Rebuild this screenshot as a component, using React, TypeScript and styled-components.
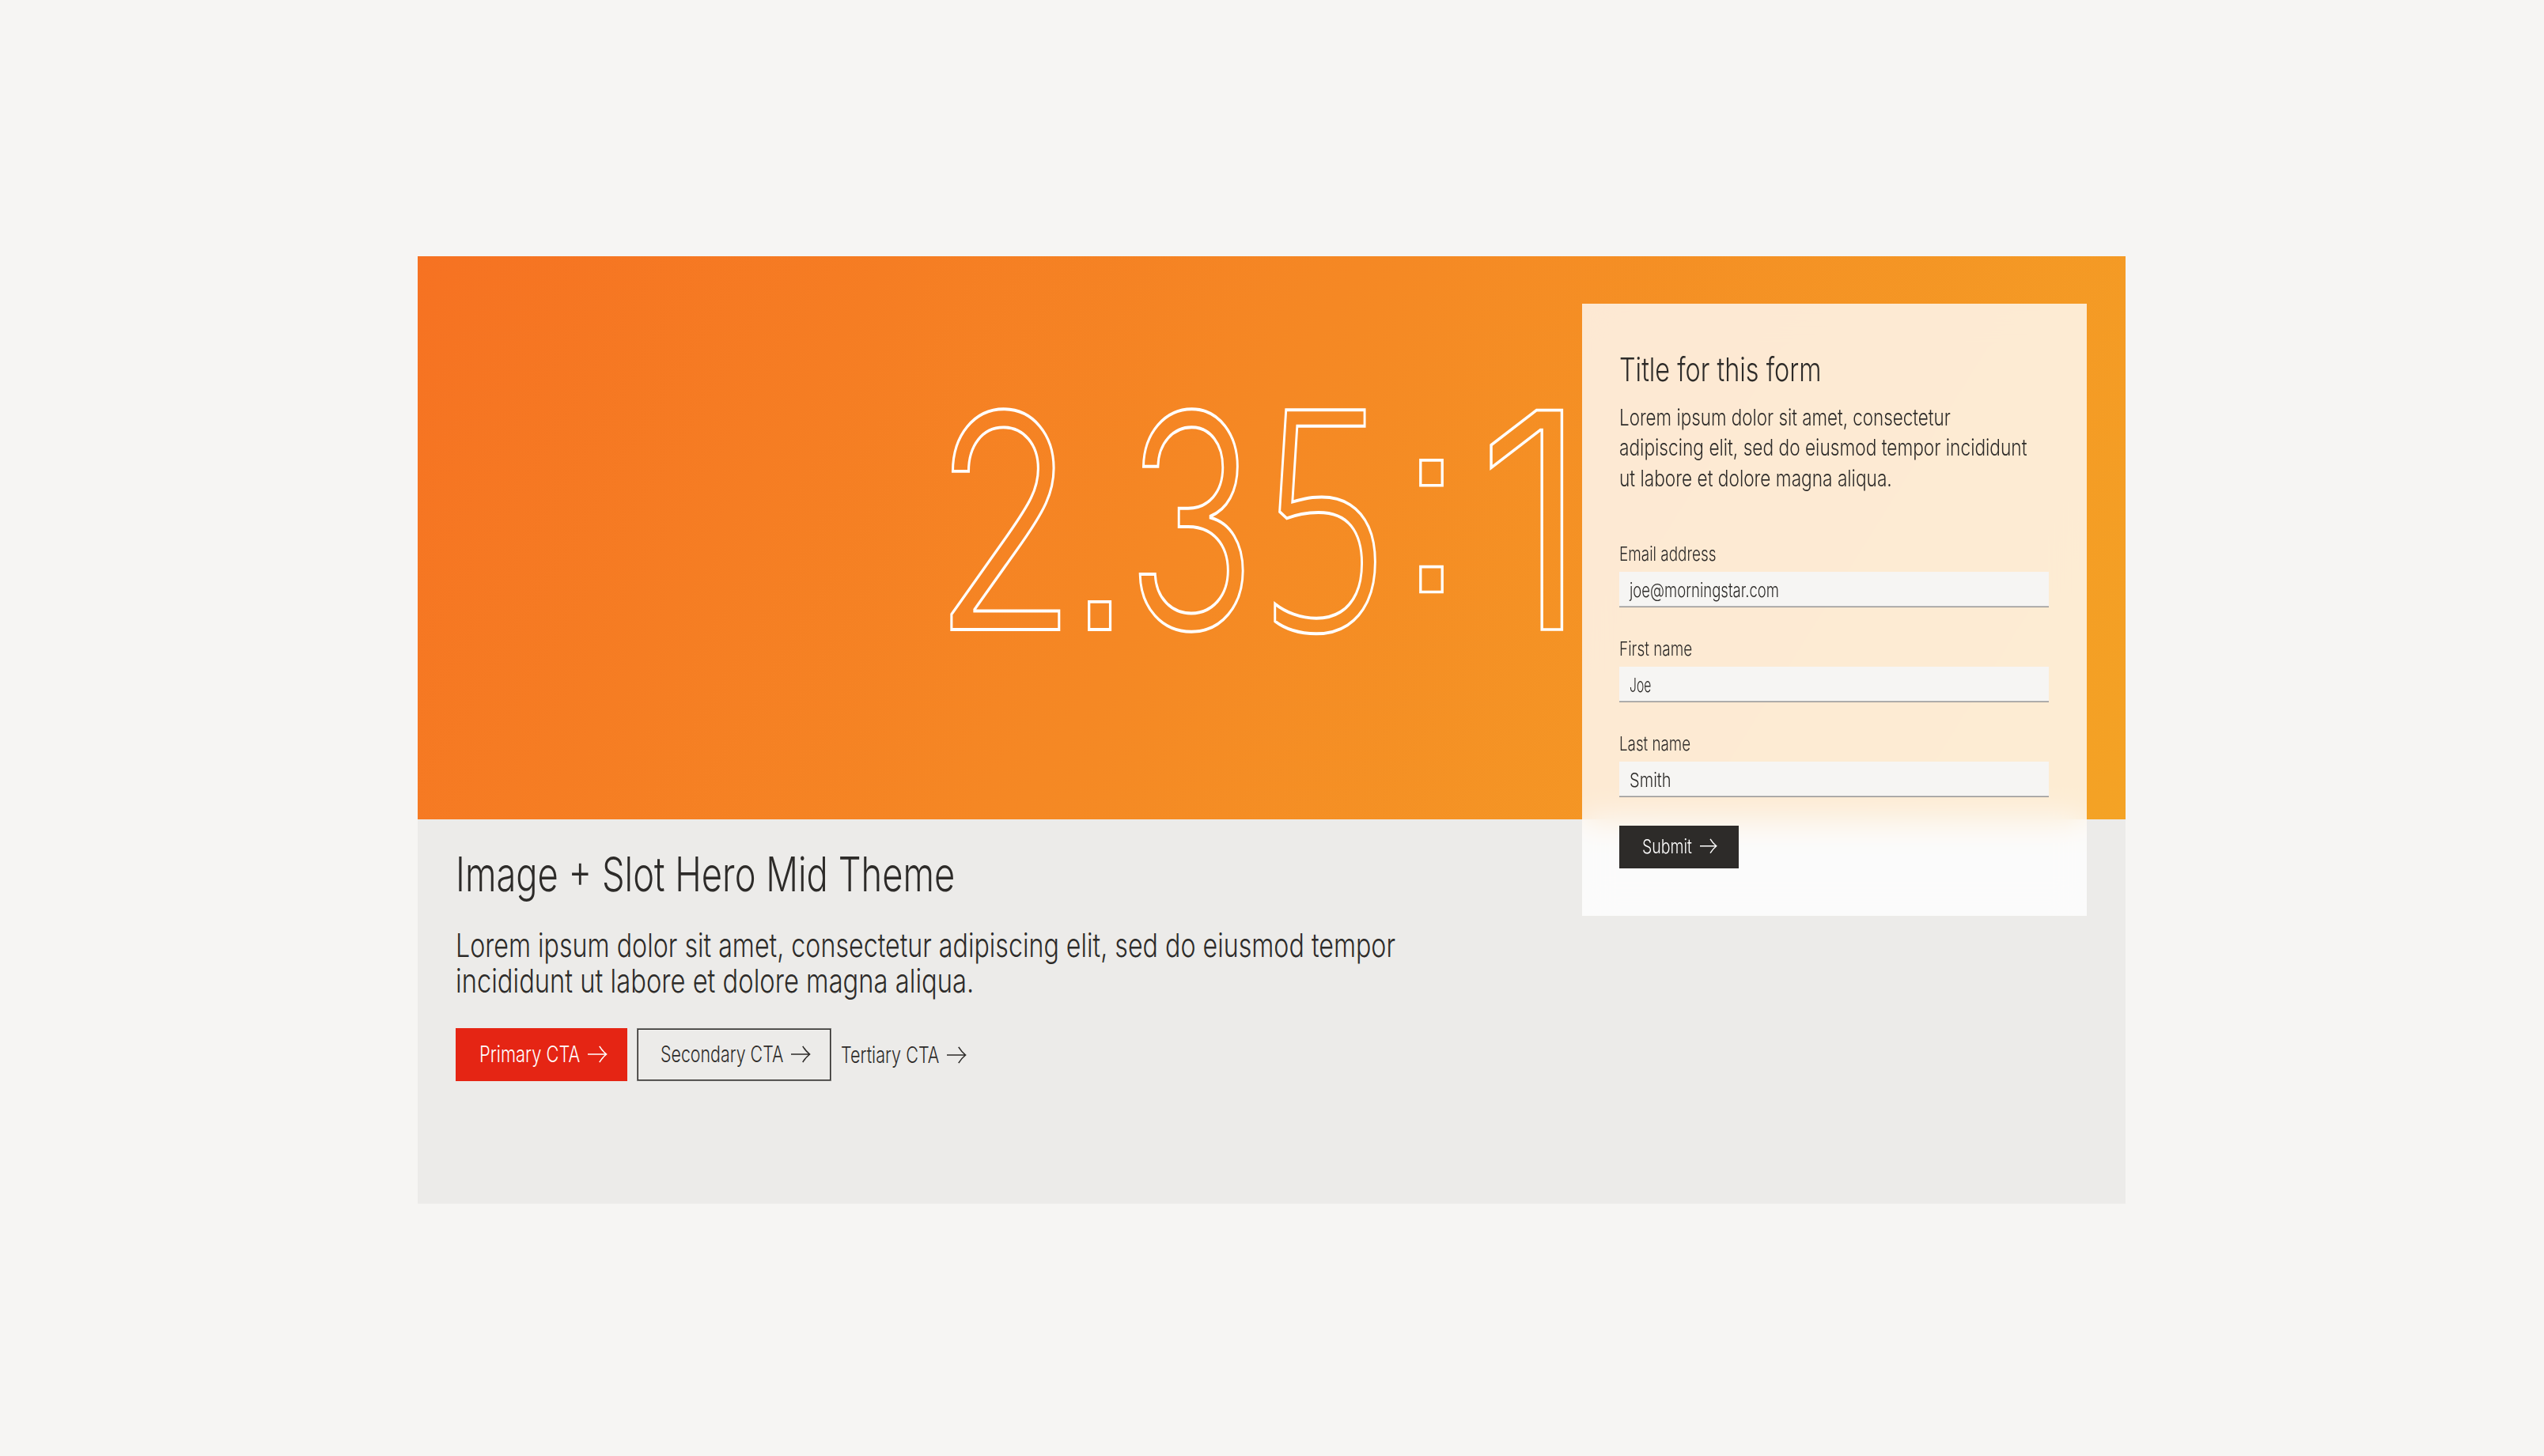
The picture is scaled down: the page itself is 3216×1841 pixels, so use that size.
import React, { useMemo } from "react";
import styled, { createGlobalStyle, css } from "styled-components";

const FAMILY = '"Inter", "Liberation Sans", sans-serif';
const HUMANIST_FAMILY = '"Noto Sans", "Open Sans", sans-serif';
const SQUARE_DOT_FAMILY = '"Liberation Sans", Arial, sans-serif';
const WEIGHT = 350;

const GlobalStyle = createGlobalStyle`
  *, *::before, *::after { box-sizing: border-box; }
  body {
    margin: 0;
    background: #f6f5f3;
    color: #2d2b29;
    font-family: ${FAMILY};
    font-weight: ${WEIGHT};
  }
  h1, h2, p { margin: 0; font-weight: inherit; }
`;

/* ---------- condensed text ---------- */

const measure = (text: string, size: number, family = FAMILY) => {
  const ctx = document.createElement("canvas").getContext("2d")!;
  // Measured at 10x so the rounded ink bounds stay precise.
  ctx.font = `${WEIGHT} ${size * 10}px ${family}`;
  const m = ctx.measureText(text);
  return {
    left: -m.actualBoundingBoxLeft / 10,
    right: m.actualBoundingBoxRight / 10,
    top: -m.actualBoundingBoxAscent / 10,
    bottom: m.actualBoundingBoxDescent / 10,
  };
};

const LineBox = styled.span<{ $size: number; $width: number }>`
  display: block;
  flex: none;
  width: ${(p) => p.$width}px;
  font-size: ${(p) => p.$size}px;
  white-space: nowrap;
`;

const LineInk = styled.span`
  display: inline-block;
  vertical-align: top;
  transform-origin: 0 50%;
`;

/** One line of text, squeezed horizontally until it is `width` px wide. */
function Line({ size, width, children }: { size: number; width: number; children: string }) {
  const scale = useMemo(() => width / measure(children, size).right, [children, size, width]);
  return (
    <LineBox $size={size} $width={width}>
      <LineInk style={{ transform: `scaleX(${scale})` }}>{children}</LineInk>
    </LineBox>
  );
}

/* ---------- page ---------- */

const Page = styled.main`
  display: flex;
  justify-content: flex-start;
  min-height: 1841px;
  padding: 324px 529px 318px 528px;
`;

const Hero = styled.section`
  position: relative;
  display: flex;
  flex-direction: column;
  width: 2159px;
  height: 1198px;
  background: #ecebe9;
`;

const Artwork = styled.div`
  flex: none;
  height: 712px;
  background: linear-gradient(122deg, #f67222 0%, #f58824 46%, #f4a325 100%);

  svg { display: block; }
`;

const Outline = styled.text`
  font-weight: ${WEIGHT};
  fill: none;
  stroke: #fff;
  stroke-width: 3.5px;
  vector-effect: non-scaling-stroke;
`;

const Content = styled.div`
  display: flex;
  flex-direction: column;
  align-items: flex-start;
  padding: 39px 48px 0;
`;

const Heading = styled.h1`
  line-height: 60px;
`;

const Lead = styled.p`
  margin-top: 38px;
  line-height: 45px;
`;

const Actions = styled.div`
  display: flex;
  align-items: stretch;
  height: 67px;
  margin-top: 37px;
`;

type Variant = "primary" | "secondary" | "tertiary" | "submit";

const variants: Record<Variant, ReturnType<typeof css>> = {
  primary: css`
    width: 217px;
    padding: 0 0 2px 30px;
    background: #e52514;
    color: #fff;
  `,
  secondary: css`
    width: 246px;
    margin-left: 12px;
    padding: 0 0 2px 29px;
    border: 1px solid rgba(45, 43, 41, 0.6);
    box-shadow: inset 0 0 0 1px #2d2b29;
    color: #2d2b29;
  `,
  tertiary: css`
    margin-left: 12px;
    color: #2d2b29;
  `,
  submit: css`
    width: 151px;
    height: 54px;
    margin-top: 36px;
    padding: 0 0 3px 29px;
    background: #2d2b29;
    color: #fff;
  `,
};

const Button = styled.button<{ $variant: Variant }>`
  display: flex;
  align-items: center;
  gap: 10px;
  padding: 0;
  border: 0;
  background: none;
  font: inherit;
  line-height: 36px;
  text-align: left;
  ${(p) => variants[p.$variant]}
`;

const ArrowSvg = styled.svg`
  flex: none;
  fill: none;
  stroke: currentColor;
  stroke-width: 1.6;
`;

const Arrow = ({ scale = 1 }: { scale?: number }) => (
  <ArrowSvg width={25 * scale} height={22 * scale} viewBox="0 0 25 22">
    <path d="M0 11H23.6M14.8 0.9Q18.4 6.8 23.6 11Q18.4 15.2 14.8 21.1" />
  </ArrowSvg>
);

/* ---------- form ---------- */

const FormCard = styled.form`
  position: absolute;
  top: 60px;
  right: 49px;
  display: flex;
  flex-direction: column;
  align-items: flex-start;
  width: 638px;
  height: 774px;
  padding: 60px 48px 60px 47px;
  background: rgba(255, 255, 255, 0.8);
  backdrop-filter: blur(20px);
`;

const FormTitle = styled.h2`
  line-height: 46px;
`;

const FormText = styled.p`
  margin-top: 19px;
  line-height: 38.4px;
`;

const Fields = styled.div`
  display: grid;
  gap: 38px;
  width: 100%;
  margin-top: 61.8px;
`;

const Field = styled.label`
  display: grid;
  gap: 7px;
  line-height: 30px;
`;

const Input = styled.span`
  display: flex;
  align-items: center;
  height: 45px;
  padding: 3px 13px 0;
  border-bottom: 1px solid #999897;
  box-shadow: inset 0 -1px 0 #c4c3c2;
  background: #f6f5f3;
`;

/* ---------- artwork digits ---------- */

interface GlyphProps {
  char: string;
  left: number;
  right: number;
  top: number;
  bottom: number;
  family: string;
}

const glyphs: GlyphProps[] = [
  { char: "2", left: 674, right: 814, top: 188.5, bottom: 472, family: FAMILY },
  { char: ".", left: 845, right: 875.8, top: 436, bottom: 472, family: SQUARE_DOT_FAMILY },
  { char: "3", left: 912, right: 1044.5, top: 188.5, bottom: 477, family: FAMILY },
  { char: "5", left: 1082, right: 1212, top: 192.5, bottom: 479.5, family: HUMANIST_FAMILY },
  { char: ":", left: 1264, right: 1295.5, top: 257, bottom: 424.5, family: SQUARE_DOT_FAMILY },
  { char: "1", left: 1354, right: 1452, top: 192, bottom: 472, family: FAMILY },
];

const DIGIT_SIZE = 382;

/** Outlined character stretched to the given bounds on the artwork. */
function Glyph({ char, left, right, top, bottom, family }: GlyphProps) {
  const ink = measure(char, DIGIT_SIZE, family);
  const sx = (right - left) / (ink.right - ink.left);
  const sy = (bottom - top) / (ink.bottom - ink.top);
  return (
    <Outline
      fontFamily={family}
      fontSize={DIGIT_SIZE}
      transform={`translate(${left - ink.left * sx} ${bottom - ink.bottom * sy}) scale(${sx} ${sy})`}
    >
      {char}
    </Outline>
  );
}

const fields = [
  { label: "Email address", labelWidth: 121.5, value: "joe@morningstar.com", valueWidth: 187.5 },
  { label: "First name", labelWidth: 91.4, value: "Joe", valueWidth: 26.5 },
  { label: "Last name", labelWidth: 89.1, value: "Smith", valueWidth: 51 },
];

export default function App() {
  return (
    <>
      <GlobalStyle />
      <Page>
        <Hero>
          <Artwork>
            <svg width="2159" height="712">
              {glyphs.map((g) => (
                <Glyph key={g.char} {...g} />
              ))}
            </svg>
          </Artwork>
          <Content>
            <Heading>
              <Line size={60} width={629}>Image + Slot Hero Mid Theme</Line>
            </Heading>
            <Lead>
              <Line size={41.5} width={1187.5}>
                Lorem ipsum dolor sit amet, consectetur adipiscing elit, sed do eiusmod tempor
              </Line>
              <Line size={41.5} width={652.6}>incididunt ut labore et dolore magna aliqua.</Line>
            </Lead>
            <Actions>
              <Button type="button" $variant="primary">
                <Line size={28.6} width={127}>Primary CTA</Line>
                <Arrow />
              </Button>
              <Button type="button" $variant="secondary">
                <Line size={28.6} width={155}>Secondary CTA</Line>
                <Arrow />
              </Button>
              <Button type="button" $variant="tertiary">
                <Line size={28.6} width={124}>Tertiary CTA</Line>
                <Arrow />
              </Button>
            </Actions>
          </Content>
          <FormCard>
            <FormTitle>
              <Line size={41.5} width={253}>Title for this form</Line>
            </FormTitle>
            <FormText>
              <Line size={28.6} width={418.5}>Lorem ipsum dolor sit amet, consectetur</Line>
              <Line size={28.6} width={515.2}>adipiscing elit, sed do eiusmod tempor incididunt</Line>
              <Line size={28.6} width={343}>ut labore et dolore magna aliqua.</Line>
            </FormText>
            <Fields>
              {fields.map((f) => (
                <Field key={f.label}>
                  <Line size={24.2} width={f.labelWidth}>{f.label}</Line>
                  <Input>
                    <Line size={24.2} width={f.valueWidth}>{f.value}</Line>
                  </Input>
                </Field>
              ))}
            </Fields>
            <Button type="button" $variant="submit">
              <Line size={24.4} width={62.5}>Submit</Line>
              <Arrow scale={0.88} />
            </Button>
          </FormCard>
        </Hero>
      </Page>
    </>
  );
}
